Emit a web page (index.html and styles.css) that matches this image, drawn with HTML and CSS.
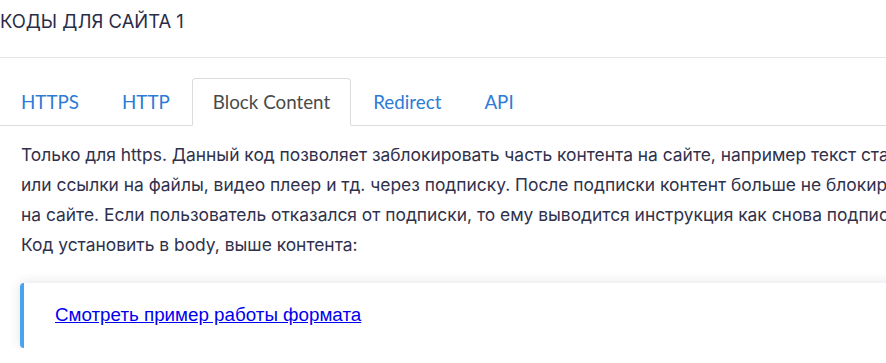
FILE: index.html
```
<!DOCTYPE html>
<html>
<head>
	<meta charset="utf-8">
	<title>Коды для сайта</title>
	<link rel="stylesheet" href="styles.css">
</head>
<body>
	<div class="page">
		<div class="page-head">
			<h2 class="page-title">КОДЫ ДЛЯ САЙТА 1</h2>
		</div>

		<ul class="code-tabs">
			<li><a href="#">HTTPS</a></li>
			<li><a href="#">HTTP</a></li>
			<li class="active"><a href="#">Block Content</a></li>
			<li><a href="#">Redirect</a></li>
			<li><a href="#">API</a></li>
		</ul>

		<div class="tab-body">
			<p class="tab-text">
				<span>Только для https. Данный код позволяет заблокировать часть контента на сайте, например текст статьи</span><br>
				<span>или ссылки на файлы, видео плеер и тд. через подписку. После подписки контент больше не блокируется</span><br>
				<span>на сайте. Если пользователь отказался от подписки, то ему выводится инструкция как снова подписаться.</span><br>
				<span>Код установить в body, выше контента:</span>
			</p>

			<div class="note-box">
				<a href="#">Смотреть пример работы формата</a>
			</div>
		</div>
	</div>
</body>
</html>
```

FILE: styles.css
```
body {
	margin: 0;
	background: #fff;
	overflow: hidden;
}
.page {
	width: 1100px;
}
.page-head {
	height: 57px;
	border-bottom: 1px solid #e6e6e6;
}
.page-title {
	margin: 0;
	padding: 9px 0 0 0;
	font-family: "Inter", "Liberation Sans", sans-serif;
	font-weight: 400;
	font-size: 18.4px;
	line-height: 24px;
	color: #2b2c48;
}
.code-tabs {
	display: flex;
	margin: 20px 0 0 0;
	padding: 0;
	list-style: none;
	border-bottom: 1px solid #dcdcdc;
	font-family: "Lato", sans-serif;
	font-size: 18.8px;
}
.code-tabs li {
	margin: 0 1px -1px 0;
}
.code-tabs a {
	display: block;
	padding: 12px 20px 12px 20px;
	line-height: 22px;
	color: #2c7bd5;
	text-decoration: none;
	border: 1px solid transparent;
	border-radius: 4px 4px 0 0;
}
.code-tabs .active a {
	color: #4a4a4a;
	background: #fff;
	border-color: #dcdcdc #dcdcdc #fff #dcdcdc;
}
.tab-body {
	padding: 0 0 0 21px;
}
.tab-text {
	margin: 0;
	padding-top: 14px;
	white-space: nowrap;
	font-family: "Inter", "Liberation Sans", sans-serif;
	font-size: 17.4px;
	line-height: 30px;
	color: #30314c;
}
.note-box {
	margin: 23px 0 0 -1px;
	padding: 19px 31px 20px 31px;
	border-left: 4px solid #4aa3ef;
	border-radius: 4px 0 0 4px;
	background: #fff;
	box-shadow: 0 0 12px rgba(40, 50, 80, 0.14);
}
.note-box a {
	font-family: "Liberation Sans", Arial, sans-serif;
	font-size: 18.8px;
	line-height: 26px;
	color: #0000ee;
}
```
